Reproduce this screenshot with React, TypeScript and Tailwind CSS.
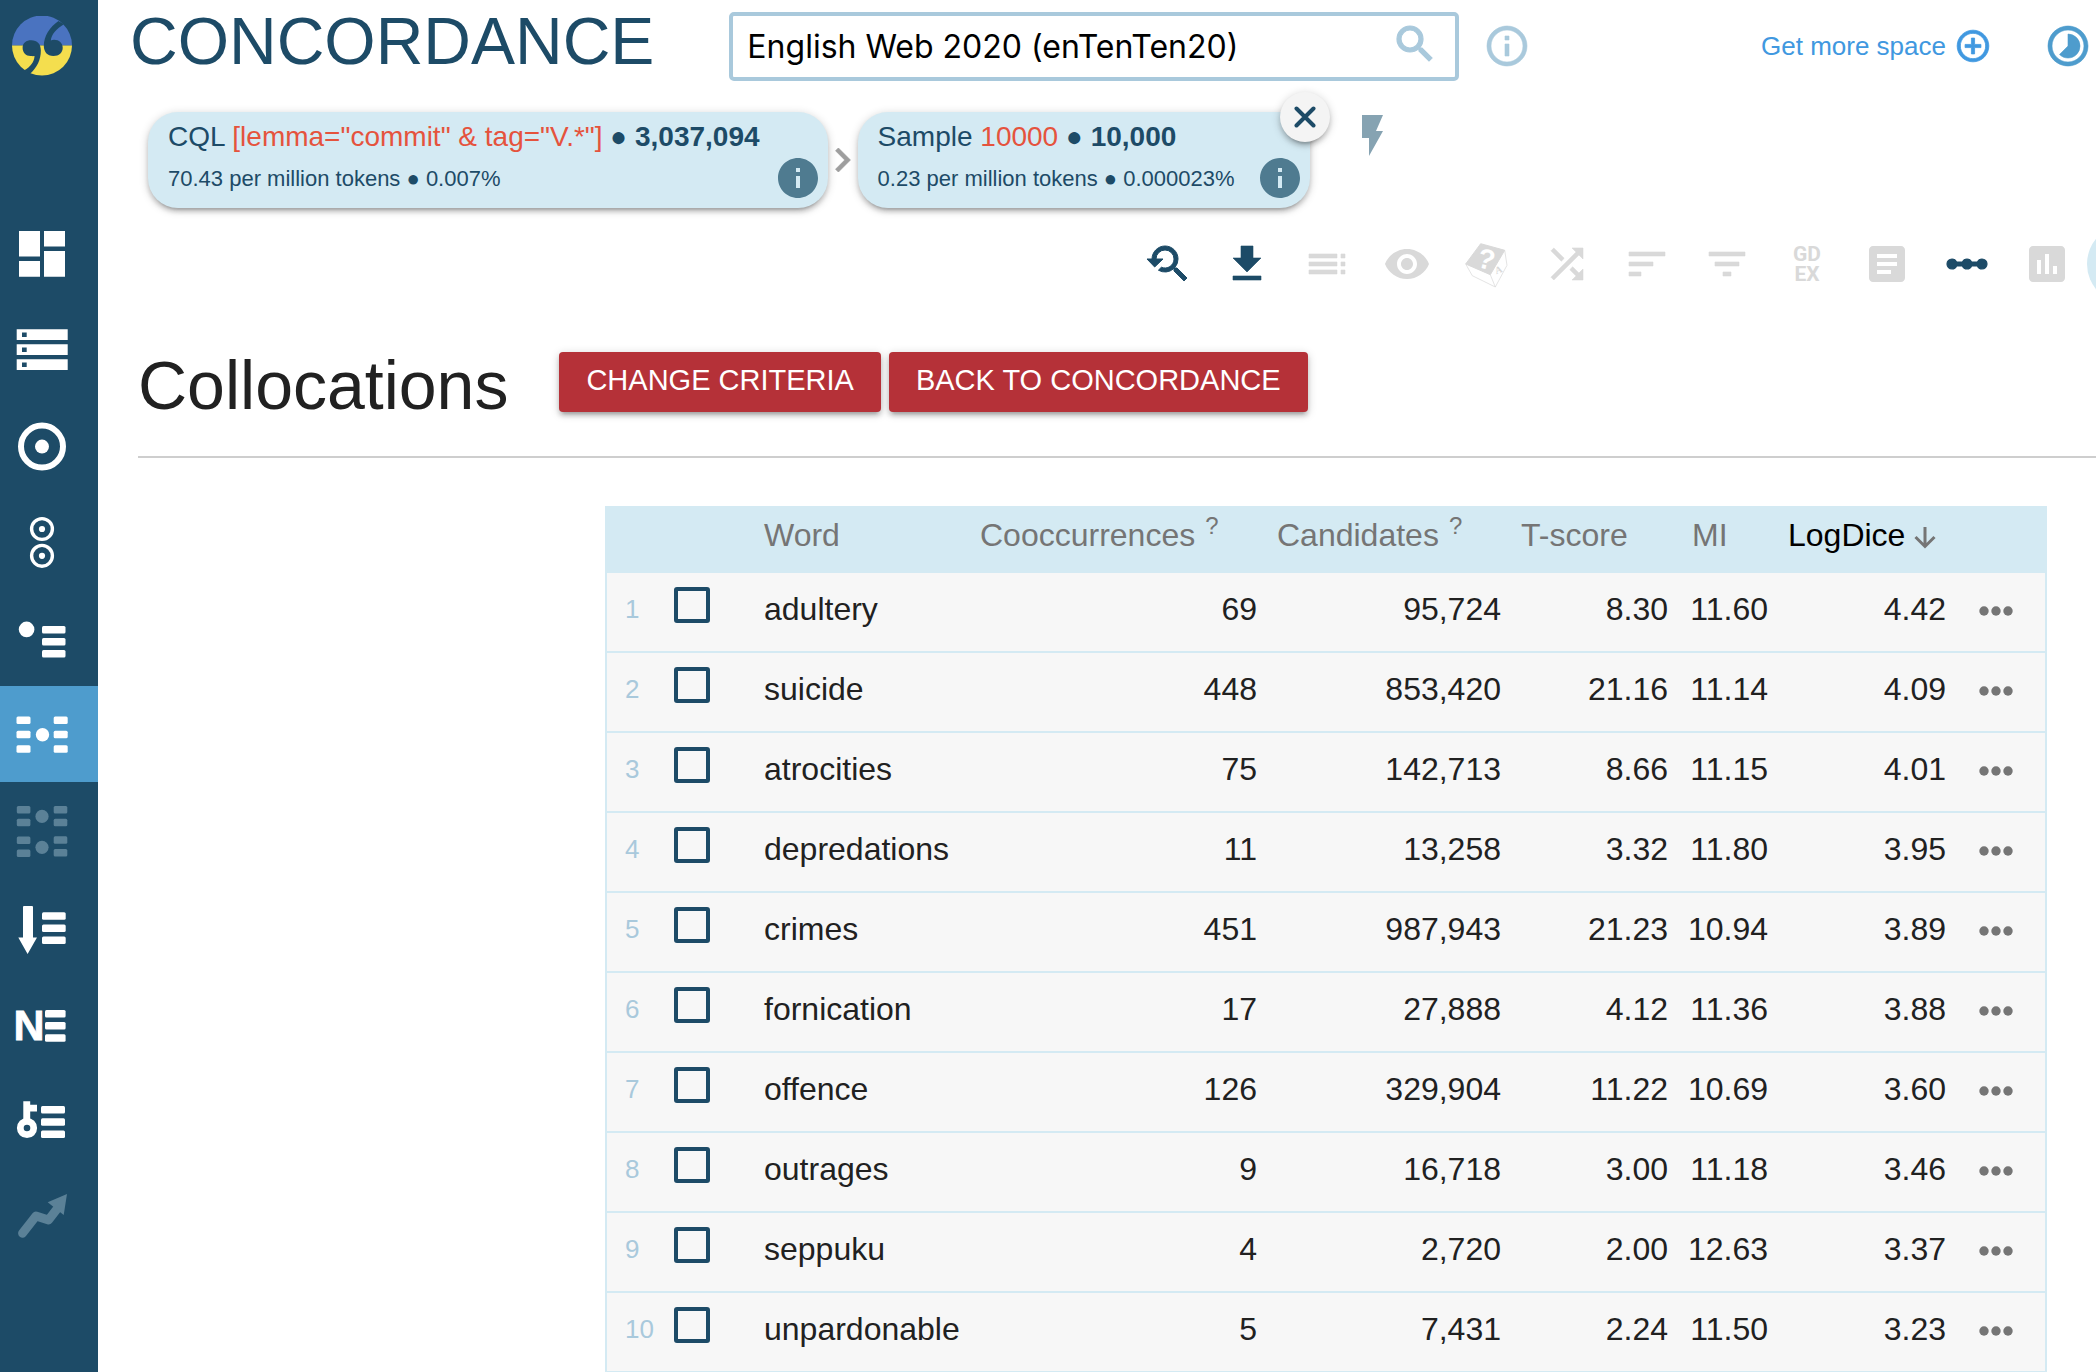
import type { ReactNode } from 'react';
import {
  MdAddCircleOutline,
  MdArticle,
  MdDownload,
  MdFilterList,
  MdInfo,
  MdInfoOutline,
  MdInsertChart,
  MdLinearScale,
  MdSearch,
  MdShuffle,
  MdSort,
  MdTimelapse,
  MdToc,
  MdVisibility,
  MdYoutubeSearchedFor,
} from 'react-icons/md';

function Bars({ x, width, ys }: { x: number; width: number; ys: number[] }) {
  return (
    <>
      {ys.map((y) => (
        <rect key={y} x={x} y={y} width={width} height={7.5} rx={1.5} />
      ))}
    </>
  );
}

type NavItem = { label: string; icon: ReactNode; state?: 'active' | 'disabled' };

const navItems: NavItem[] = [
  {
    label: 'Dashboard',
    icon: <path d="M7 7h21v25.5H7zM7 37h21v15.7H7zM32 7h21v15.5H32zM32 27h21v25.7H32z" />,
  },
  {
    label: 'Corpora',
    icon: (
      <path
        fillRule="evenodd"
        d="M4.7 9.2h51V20h-51zM10 12.5v4.6h4.7v-4.6zM4.7 24.2h51V35h-51zM10 27.5v4.6h4.7v-4.6zM4.7 39.2h51V50h-51zM10 42.5v4.6h4.7v-4.6z"
      />
    ),
  },
  {
    label: 'Word sketch',
    icon: (
      <>
        <circle cx={30} cy={30.6} r={21} fill="none" stroke="currentColor" strokeWidth={6} />
        <circle cx={30} cy={30.6} r={7} />
      </>
    ),
  },
  {
    label: 'Word sketch difference',
    icon: (
      <>
        <circle cx={30} cy={17} r={10.4} fill="none" stroke="currentColor" strokeWidth={3.4} />
        <circle cx={30} cy={17} r={3.1} />
        <circle cx={30} cy={43.8} r={10.4} fill="none" stroke="currentColor" strokeWidth={3.4} />
        <circle cx={30} cy={43.8} r={3.1} />
      </>
    ),
  },
  {
    label: 'Thesaurus',
    icon: (
      <>
        <circle cx={14.6} cy={21.4} r={7.8} />
        <Bars x={30} width={23.5} ys={[18, 30, 42]} />
      </>
    ),
  },
  {
    label: 'Concordance',
    state: 'active',
    icon: (
      <>
        <Bars x={4.5} width={14} ys={[12.6, 26.8, 41.2]} />
        <circle cx={30.5} cy={30.8} r={6.7} />
        <Bars x={41.7} width={14} ys={[12.6, 26.8, 41.2]} />
      </>
    ),
  },
  {
    label: 'Parallel concordance',
    state: 'disabled',
    icon: (
      <>
        <Bars x={4.8} width={13.6} ys={[6, 18.8, 36.6, 49.4]} />
        <circle cx={30} cy={16.4} r={6.6} />
        <circle cx={30} cy={47.3} r={6.6} />
        <Bars x={41.7} width={13.6} ys={[6, 18.8, 36.2, 49]} />
      </>
    ),
  },
  {
    label: 'Wordlist',
    icon: (
      <>
        <path d="M12 10h8a1 1 0 0 1 1 1v30.5h4L15.6 58 6.3 41.5H11V11a1 1 0 0 1 1-1z" />
        <Bars x={30} width={23.7} ys={[16.2, 28.4, 40.5]} />
      </>
    ),
  },
  {
    label: 'N-grams',
    icon: (
      <>
        <text
          x={1.5}
          y={48}
          fontFamily="Liberation Sans, Arial, sans-serif"
          fontWeight={700}
          fontSize={43}
          stroke="currentColor"
          strokeWidth={0.8}
        >
          N
        </text>
        <Bars x={33} width={20.6} ys={[18, 30, 42.3]} />
      </>
    ),
  },
  {
    label: 'Keywords',
    icon: (
      <>
        <path d="M11.3 13.2h6.9v3.6H25v6.8h-6.8V33h-6.9z" />
        <circle cx={15} cy={40} r={6.7} fill="none" stroke="currentColor" strokeWidth={6.8} />
        <Bars x={29} width={24} ys={[18, 30.2, 42.4]} />
      </>
    ),
  },
  {
    label: 'Trends',
    state: 'disabled',
    icon: (
      <>
        <path
          d="M10.5 49.3 24 32l12.5 4L46.5 23"
          fill="none"
          stroke="currentColor"
          strokeWidth={8.8}
          strokeLinecap="round"
          strokeLinejoin="round"
        />
        <path d="M55 10 35.7 18.3 51.7 31z" />
      </>
    ),
  },
];

function Logo() {
  return (
    <svg viewBox="36 47 181 181" className="size-[60px]" role="img" aria-label="Sketch Engine">
      <path d="M36 136a90.5 90.5 0 0 1 181 0z" fill="#4a73c0" />
      <path d="M36 136a90.5 90.5 0 0 0 181 0z" fill="#f4de4e" />
      <g fill="#1d4b67">
        <path d="M68 143C68 128 79 120 94 120c18 0 29 11 29 31 0 28-11 50-33 71l-17-11c19-10 30-25 31-43-5 1-8 0-12 0-14 0-24-11-24-25z" />
        <path d="M189 143c0 14-11 25-28 25-19 0-29-13-29-31 0-29 18-57 44-75l17 10c-23 14-38 30-40 49 3-1 6-2 10-2 15 0 26 10 26 24z" />
      </g>
    </svg>
  );
}

function Sidebar() {
  return (
    <aside className="w-[98px] shrink-0 bg-[#1d4b67]">
      <a href="#home" className="flex h-[206px] items-start pl-3 pt-4">
        <Logo />
      </a>
      <nav>
        {navItems.map((item) => (
          <a
            key={item.label}
            href="#tool"
            aria-label={item.label}
            className={
              item.state === 'active'
                ? 'flex h-24 items-center bg-[#4e9ccd] pl-3 text-white'
                : item.state === 'disabled'
                  ? 'flex h-24 items-center pl-3 text-[#5b8197]'
                  : 'flex h-24 items-center pl-3 text-white'
            }
          >
            <svg viewBox="0 0 60 60" className="size-[60px] fill-current">
              {item.icon}
            </svg>
          </a>
        ))}
      </nav>
    </aside>
  );
}

function Header() {
  return (
    <header className="flex h-[92px] items-center pl-8 pr-1">
      <h1 className="self-start text-[66px] leading-[82px] text-[#1d4b67]">CONCORDANCE</h1>
      <div className="relative ml-[75px] w-[730px]">
        <input
          type="text"
          aria-label="Corpus"
          defaultValue="English Web 2020 (enTenTen20)"
          className="block h-[69px] w-full rounded-[5px] border-4 border-[#a9c9dc] bg-white pl-[14px] pr-16 font-[Inter,sans-serif] text-[32px] leading-[60px] text-black outline-none"
        />
        <button type="button" aria-label="Search corpus" className="absolute right-5 top-2 text-[#a9c9dc]">
          <MdSearch className="size-12 [&>path:last-child]:stroke-[0.6]" />
        </button>
      </div>
      <button type="button" aria-label="Corpus info" className="ml-6 text-[#a9c9dc]">
        <MdInfoOutline className="size-12 [&>path:last-child]:stroke-[0.3]" />
      </button>
      <a href="#space" className="ml-auto flex items-center gap-2 text-[26px] leading-8 text-[#4098e0]">
        Get more space
        <MdAddCircleOutline className="size-[38px] [&>path:last-child]:stroke-[0.5]" />
      </a>
      <button type="button" aria-label="Used space" className="ml-[52px] text-[#4e9ccd]">
        <MdTimelapse className="size-12 [&>path:last-child]:stroke-[0.3]" />
      </button>
    </header>
  );
}

type ChipProps = { name: string; value: string; count: string; rate: string; share: string; closable?: boolean };

function Chip({ name, value, count, rate, share, closable }: ChipProps) {
  return (
    <div className="relative flex h-24 gap-3.5 rounded-[30px] bg-[#d4eaf3] pl-5 pr-1.5 pt-[9px] text-[#1d4b67] shadow-[0_4px_4px_rgba(0,0,0,0.14),0_6px_2px_-4px_rgba(0,0,0,0.12),0_2px_10px_rgba(0,0,0,0.2)]">
      <div className="min-w-[364px] whitespace-nowrap">
        <div className="text-[28px] leading-8">
          {name} <span className="text-[#e5533d]">{value}</span> ● <b>{count}</b>
        </div>
        <div className="mt-2.5 text-[22px] leading-8">
          {rate} per million tokens ● {share}
        </div>
      </div>
      <button type="button" aria-label={`${name} details`} className="mb-1.5 self-end text-[#4f7b90]">
        <MdInfo className="size-12" />
      </button>
      {closable && (
        <button
          type="button"
          aria-label="Remove step"
          className="absolute -right-5 -top-5 flex size-[50px] items-center justify-center rounded-full bg-[#f4f4f4] shadow-[0_4px_4px_rgba(0,0,0,0.14),0_6px_2px_-4px_rgba(0,0,0,0.12),0_2px_10px_rgba(0,0,0,0.2)]"
        >
          <svg viewBox="0 0 22 22" className="size-[22px]" stroke="currentColor" strokeWidth={4} strokeLinecap="round">
            <path d="M2.5 2.5l17 17M19.5 2.5l-17 17" />
          </svg>
        </button>
      )}
    </div>
  );
}

function Steps() {
  return (
    <div className="mt-5 flex items-center pl-[50px]">
      <Chip name="CQL" value={'[lemma="commit" & tag="V.*"]'} count="3,037,094" rate="70.43" share="0.007%" />
      <svg viewBox="8.3 6 8 12" className="mx-[7px] h-6 w-4 fill-[#9e9e9e] stroke-[#9e9e9e] stroke-[0.4]">
        <path d="M10 6L8.590 7.410 13.170 12l-4.580 4.590L10 18l6-6z" />
      </svg>
      <Chip name="Sample" value="10000" count="10,000" rate="0.23" share="0.000023%" closable />
      <button type="button" aria-label="Quick actions" className="mb-[50px] ml-[52px]">
        <svg viewBox="0 0 21 41" className="h-[41px] w-[21px] fill-[#86a3b2]">
          <path d="M0 0h21l-7 16h7L7 41V23H0z" />
        </svg>
      </button>
    </div>
  );
}

function DiceIcon() {
  return (
    <svg viewBox="0 0 48 48" className="size-12">
      <path d="M17.7 3.7 41.7 10.3 27.3 34.7 2.7 24z" fill="currentColor" stroke="currentColor" strokeLinejoin="round" />
      <path
        d="M41.7 10.3 44 25.3 32.3 47 27.3 34.7M2.7 24l6.6 11.7L32.3 47"
        fill="none"
        stroke="currentColor"
        strokeWidth={0.7}
      />
      <text
        x={14.5}
        y={28}
        transform="rotate(14 20 20)"
        fill="#fff"
        fontFamily="Liberation Sans, Arial, sans-serif"
        fontWeight={700}
        fontSize={28}
      >
        ?
      </text>
      <text
        x={32}
        y={33}
        transform="rotate(-20 36 30)"
        fill="currentColor"
        fontFamily="Liberation Serif, serif"
        fontWeight={700}
        fontSize={10}
      >
        A
      </text>
    </svg>
  );
}

const tools: { label: string; icon: ReactNode; tone: string }[] = [
  {
    label: 'Change criteria',
    icon: <MdYoutubeSearchedFor className="size-12 [&>path:last-child]:stroke-[0.5]" />,
    tone: 'on',
  },
  { label: 'Download', icon: <MdDownload className="size-12 [&>path:last-child]:stroke-[0.3]" />, tone: 'on' },
  { label: 'View options', icon: <MdToc className="size-12 [&>path:last-child]:stroke-[0.3]" />, tone: 'off' },
  { label: 'KWIC view', icon: <MdVisibility className="size-12" />, tone: 'off' },
  { label: 'Random sample', icon: <DiceIcon />, tone: 'off' },
  { label: 'Shuffle', icon: <MdShuffle className="size-12 [&>path:last-child]:stroke-[0.3]" />, tone: 'off' },
  { label: 'Sort', icon: <MdSort className="size-12 [&>path:last-child]:stroke-[0.3]" />, tone: 'off' },
  { label: 'Filter', icon: <MdFilterList className="size-12 [&>path:last-child]:stroke-[0.3]" />, tone: 'off' },
  {
    label: 'Good examples',
    icon: (
      <span className="flex flex-col items-center font-[Roboto,sans-serif] text-[21px] font-bold leading-5">
        <span>GD</span>
        <span>EX</span>
      </span>
    ),
    tone: 'off',
  },
  { label: 'Frequency', icon: <MdArticle className="size-12" />, tone: 'off' },
  {
    label: 'Collocations',
    icon: <MdLinearScale className="size-12 [&>path:last-child]:stroke-[0.6]" />,
    tone: 'on',
  },
  { label: 'Distribution', icon: <MdInsertChart className="size-12" />, tone: 'off' },
  { label: 'More', icon: null, tone: 'more' },
];

function Toolbar() {
  return (
    <div className="mr-[-71px] mt-4 flex justify-end">
      {tools.map((tool) => (
        <button
          key={tool.label}
          type="button"
          aria-label={tool.label}
          disabled={tool.tone === 'off'}
          className={
            tool.tone === 'on'
              ? 'flex size-20 items-center justify-center text-[#1d4b67]'
              : tool.tone === 'more'
                ? 'size-20 rounded-full bg-[#d4eaf3]'
                : 'flex size-20 items-center justify-center text-[#d9d9d9]'
          }
        >
          {tool.icon}
        </button>
      ))}
    </div>
  );
}

function RedButton({ children }: { children: ReactNode }) {
  return (
    <button
      type="button"
      className="h-[60px] rounded bg-[#b53138] px-[27px] pb-1 text-[29px] leading-8 text-white shadow-[0_4px_4px_rgba(0,0,0,0.14),0_6px_2px_-4px_rgba(0,0,0,0.12),0_2px_10px_rgba(0,0,0,0.2)]"
    >
      {children}
    </button>
  );
}

const rows = [
  ['adultery', '69', '95,724', '8.30', '11.60', '4.42'],
  ['suicide', '448', '853,420', '21.16', '11.14', '4.09'],
  ['atrocities', '75', '142,713', '8.66', '11.15', '4.01'],
  ['depredations', '11', '13,258', '3.32', '11.80', '3.95'],
  ['crimes', '451', '987,943', '21.23', '10.94', '3.89'],
  ['fornication', '17', '27,888', '4.12', '11.36', '3.88'],
  ['offence', '126', '329,904', '11.22', '10.69', '3.60'],
  ['outrages', '9', '16,718', '3.00', '11.18', '3.46'],
  ['seppuku', '4', '2,720', '2.00', '12.63', '3.37'],
  ['unpardonable', '5', '7,431', '2.24', '11.50', '3.23'],
];

function Hint() {
  return <sup className="ml-2.5 text-[24px]">?</sup>;
}

function CollocationTable() {
  return (
    <table className="ml-auto mr-[49px] mt-12 w-full max-w-[1442px] table-fixed border-separate border-spacing-0 text-[32px] leading-10 text-[#212121]">
      <colgroup>
        <col className="w-[59px]" />
        <col className="w-[90px]" />
        <col className="w-[216px]" />
        <col className="w-[297px]" />
        <col className="w-[244px]" />
        <col className="w-[167px]" />
        <col className="w-[100px]" />
        <col className="w-[178px]" />
        <col className="w-[91px]" />
      </colgroup>
      <thead>
        <tr className="h-[67px] whitespace-nowrap bg-[#d4eaf3] text-left text-[#757575] *:px-2.5 *:pb-2.5 *:font-normal">
          <td />
          <td />
          <th scope="col">Word</th>
          <th scope="col">
            Cooccurrences
            <Hint />
          </th>
          <th scope="col">
            Candidates
            <Hint />
          </th>
          <th scope="col">T-score</th>
          <th scope="col">
            <span className="pl-1">MI</span>
          </th>
          <th scope="col" className="text-black">
            <span className="flex items-center gap-2">
              LogDice
              <svg
                viewBox="0 0 24 24"
                className="mt-1 size-6 text-[#757575]"
                fill="none"
                stroke="currentColor"
                strokeWidth={3}
              >
                <path d="M12 2v19M2.5 12l9.5 9.5 9.5-9.5" />
              </svg>
            </span>
          </th>
          <td />
        </tr>
      </thead>
      <tbody>
        {rows.map((row, i) => (
          <tr key={row[0]} className="h-20 bg-[#f7f7f7] *:border-b-2 *:border-[#d4eaf3] *:px-2.5 *:pb-1.5">
            <td className="border-l-2 text-[26px] text-[#a9c9dc]">
              <span className="pl-2">{i + 1}</span>
            </td>
            <td>
              <input
                type="checkbox"
                aria-label={`Select ${row[0]}`}
                className="mb-2 block size-9 appearance-none rounded-[3px] border-4 border-[#1d4b67]"
              />
            </td>
            <td>{row[0]}</td>
            {row.slice(1).map((cell, j) => (
              <td key={j} className="text-right">
                {cell}
              </td>
            ))}
            <td className="border-r-2">
              <button type="button" aria-label={`Options for ${row[0]}`} className="ml-3 mt-1 block">
                <svg viewBox="0 0 36 10" className="h-2.5 w-9 fill-[#757575]">
                  <circle cx={6} cy={5} r={4.7} />
                  <circle cx={18} cy={5} r={4.7} />
                  <circle cx={30} cy={5} r={4.7} />
                </svg>
              </button>
            </td>
          </tr>
        ))}
      </tbody>
    </table>
  );
}

export default function App() {
  return (
    <div className="flex h-screen overflow-hidden bg-white font-['Liberation_Sans',Arial,sans-serif]">
      <Sidebar />
      <main className="min-w-0 flex-1 overflow-hidden">
        <Header />
        <Steps />
        <Toolbar />
        <section>
          <div className="mt-12 flex items-start gap-2 pl-10">
            <h2 className="mr-[43px] text-[68px] leading-[66px] text-[#212121]">Collocations</h2>
            <RedButton>CHANGE CRITERIA</RedButton>
            <RedButton>BACK TO CONCORDANCE</RedButton>
          </div>
          <hr className="ml-10 mt-[38px] border-t-2 border-[#cecece]" />
          <CollocationTable />
        </section>
      </main>
    </div>
  );
}
